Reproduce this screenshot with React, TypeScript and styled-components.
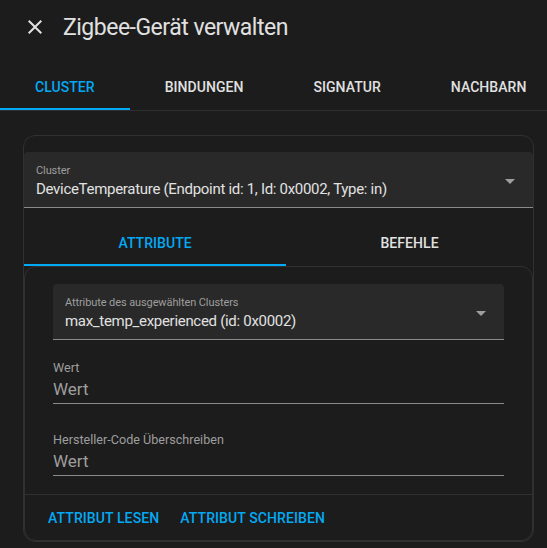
import React, { useState } from "react";
import styled, { createGlobalStyle } from "styled-components";

const GlobalStyle = createGlobalStyle`
  html, body {
    margin: 0;
    padding: 0;
    background: #1c1c1c;
    font-family: Roboto, "Noto Sans", "Liberation Sans", sans-serif;
    color: #e1e1e1;
    -webkit-font-smoothing: antialiased;
  }
`;

const Dialog = styled.div`
  width: 547px;
  height: 548px;
  overflow: hidden;
  display: flex;
  flex-direction: column;
`;

const Header = styled.div`
  display: flex;
  align-items: center;
  height: 62px;
  box-sizing: border-box;
  padding: 0 0 8px 23px;
  gap: 16px;
`;

const CloseButton = styled.button`
  display: flex;
  align-items: center;
  justify-content: center;
  width: 24px;
  height: 24px;
  padding: 0;
  border: none;
  background: none;
  color: #e1e1e1;
  cursor: pointer;
`;

const Title = styled.h1`
  margin: 0;
  font-size: 23px;
  font-weight: 400;
  color: #e1e1e1;
  letter-spacing: -0.5px;
`;

const TabBar = styled.div`
  display: flex;
  border-bottom: 1px solid #2f2f2f;
  overflow: hidden;
`;

const Tab = styled.button<{ $active?: boolean; $grow?: boolean }>`
  position: relative;
  flex: ${(p) => (p.$grow ? "1 1 auto" : "0 0 auto")};
  height: 48px;
  padding: 1px 35px 0;
  border: none;
  background: none;
  font-family: inherit;
  font-size: 14px;
  font-weight: 500;
  letter-spacing: 0.05px;
  text-transform: uppercase;
  white-space: nowrap;
  color: ${(p) => (p.$active ? "#03a9f4" : "#e1e1e1")};
  cursor: pointer;

  &::after {
    content: "";
    position: absolute;
    left: 0;
    right: 0;
    bottom: 0;
    height: 2px;
    background: ${(p) => (p.$active ? "#03a9f4" : "transparent")};
  }
`;

const Content = styled.div`
  padding: 24px 13px 0 23px;
`;

const Card = styled.div`
  border: 1px solid #303030;
  border-radius: 12px;
  padding-top: 16px;
  display: flex;
  flex-direction: column;
`;

const SelectBox = styled.div`
  position: relative;
  height: 56px;
  box-sizing: border-box;
  background: #292929;
  border-radius: 4px 4px 0 0;
  border-bottom: 1px solid #8a8a8a;
  padding: 10px 40px 0 12px;
  display: flex;
  flex-direction: column;
  justify-content: center;
`;

const SelectLabel = styled.span`
  font-size: 11px;
  letter-spacing: -0.1px;
  color: #9e9e9e;
  line-height: 16px;
`;

const SelectValue = styled.span`
  font-size: 15px;
  letter-spacing: -0.3px;
  color: #e1e1e1;
  line-height: 20px;
  white-space: nowrap;
  padding-bottom: 8px;
`;

const Arrow = styled.span`
  position: absolute;
  right: 18px;
  top: 27px;
  width: 0;
  height: 0;
  border-left: 5px solid transparent;
  border-right: 5px solid transparent;
  border-top: 5px solid #9e9e9e;
`;

const SubTabBar = styled.div`
  display: flex;
  margin-top: 10px;
`;

const InnerCard = styled.div`
  border: 1px solid #303030;
  border-radius: 12px;
  display: flex;
  flex-direction: column;
`;

const Fields = styled.div`
  padding: 17px 28px 18px;
  display: flex;
  flex-direction: column;
`;

const TextField = styled.label`
  display: flex;
  flex-direction: column;
  border-bottom: 1px solid #8a8a8a;
  margin-top: 20px;
  padding-bottom: 1px;

  & + & {
    margin-top: 28px;
  }
`;

const FieldLabel = styled.span`
  font-size: 12.6px;
  line-height: 16px;
  color: #9e9e9e;
`;

const FieldValue = styled.span`
  font-size: 17px;
  line-height: 26px;
  color: #9e9e9e;
`;

const Actions = styled.div`
  border-top: 1px solid #303030;
  height: 45px;
  display: flex;
  align-items: center;
  padding-left: 15px;
  gap: 5px;
`;

const ActionButton = styled.button`
  height: 36px;
  padding: 0 8px;
  border: none;
  background: none;
  font-family: inherit;
  font-size: 14px;
  font-weight: 500;
  letter-spacing: 0.1px;
  color: #03a9f4;
  text-transform: uppercase;
  cursor: pointer;
`;

const CloseIcon = () => (
  <svg width="24" height="24" viewBox="0 0 24 24" fill="currentColor">
    <path d="M19,6.41L17.59,5L12,10.59L6.41,5L5,6.41L10.59,12L5,17.59L6.41,19L12,13.41L17.59,19L19,17.59L13.41,12L19,6.41Z" />
  </svg>
);

const mainTabs = ["Cluster", "Bindungen", "Signatur", "Nachbarn"];

export default function App() {
  const [tab, setTab] = useState(0);
  const [subTab, setSubTab] = useState(0);

  return (
    <Dialog>
      <GlobalStyle />
      <Header>
        <CloseButton aria-label="Schließen">
          <CloseIcon />
        </CloseButton>
        <Title>Zigbee-Gerät verwalten</Title>
      </Header>
      <TabBar>
        {mainTabs.map((t, i) => (
          <Tab key={t} $active={tab === i} onClick={() => setTab(i)}>
            {t}
          </Tab>
        ))}
      </TabBar>
      <Content>
        <Card>
          <SelectBox>
            <SelectLabel>Cluster</SelectLabel>
            <SelectValue>
              DeviceTemperature (Endpoint id: 1, Id: 0x0002, Type: in)
            </SelectValue>
            <Arrow />
          </SelectBox>
          <SubTabBar>
            <Tab $grow $active={subTab === 0} onClick={() => setSubTab(0)}>
              Attribute
            </Tab>
            <Tab $grow $active={subTab === 1} onClick={() => setSubTab(1)}>
              Befehle
            </Tab>
          </SubTabBar>
          <InnerCard>
            <Fields>
              <SelectBox>
                <SelectLabel>Attribute des ausgewählten Clusters</SelectLabel>
                <SelectValue>max_temp_experienced (id: 0x0002)</SelectValue>
                <Arrow />
              </SelectBox>
              <TextField>
                <FieldLabel>Wert</FieldLabel>
                <FieldValue>Wert</FieldValue>
              </TextField>
              <TextField>
                <FieldLabel>Hersteller-Code Überschreiben</FieldLabel>
                <FieldValue>Wert</FieldValue>
              </TextField>
            </Fields>
            <Actions>
              <ActionButton>Attribut lesen</ActionButton>
              <ActionButton>Attribut schreiben</ActionButton>
            </Actions>
          </InnerCard>
        </Card>
      </Content>
    </Dialog>
  );
}
